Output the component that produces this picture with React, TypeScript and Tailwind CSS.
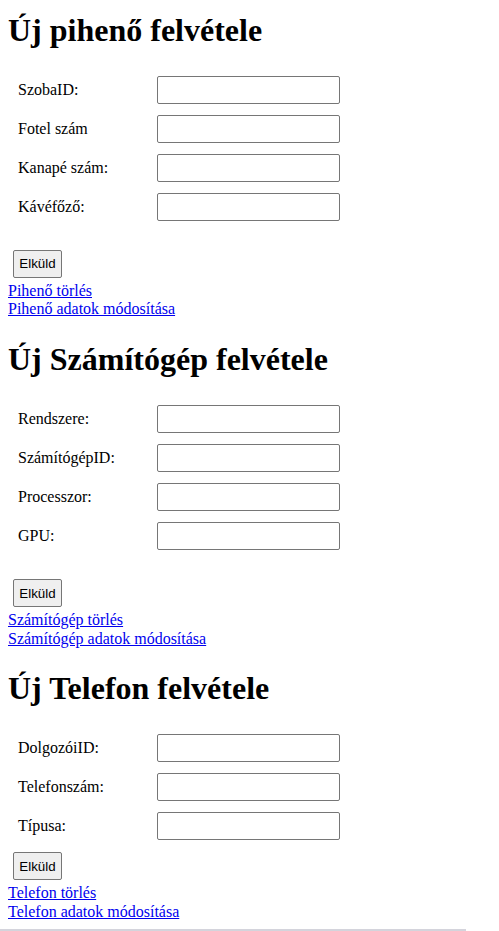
const serif = { fontFamily: '"Liberation Serif", "Times New Roman", serif' };

type Section = {
  title: string;
  fields: string[];
  buttonGap: string;
  links: string[];
};

const sections: Section[] = [
  {
    title: 'Új pihenő felvétele',
    fields: ['SzobaID:', 'Fotel szám', 'Kanapé szám:', 'Kávéfőző:'],
    buttonGap: 'mt-[29px]',
    links: ['Pihenő törlés', 'Pihenő adatok módosítása'],
  },
  {
    title: 'Új Számítógép felvétele',
    fields: ['Rendszere:', 'SzámítógépID:', 'Processzor:', 'GPU:'],
    buttonGap: 'mt-[29px]',
    links: ['Számítógép törlés', 'Számítógép adatok módosítása'],
  },
  {
    title: 'Új Telefon felvétele',
    fields: ['DolgozóiID:', 'Telefonszám:', 'Típusa:'],
    buttonGap: 'mt-[12px]',
    links: ['Telefon törlés', 'Telefon adatok módosítása'],
  },
];

function FormSection({ section, first }: { section: Section; first: boolean }) {
  return (
    <section className="flex flex-col">
      <h1
        className={`${first ? 'mt-[12px]' : 'mt-[22.4px]'} text-[32px] font-bold leading-[36.8px] text-black`}
      >
        {section.title}
      </h1>

      {/* fields */}
      <div className="mt-[27.2px] flex flex-col gap-[11px]">
        {section.fields.map((label) => (
          <div key={label} className="flex h-[28px] items-center">
            <label className="ml-[10px] w-[139px] text-[16px] leading-[18.4px] text-black">{label}</label>
            <input
              type="text"
              className="h-[28px] w-[183px] rounded-[2px] border border-[#767676] bg-white px-1 text-[13px] outline-none"
            />
          </div>
        ))}
      </div>

      <div className={`${section.buttonGap} ml-[5px]`}>
        <button
          type="button"
          className="h-[28px] w-[49px] rounded-[2px] border border-[#767676] bg-[#efefef] text-[13.33px] leading-none text-black"
          style={{ fontFamily: '"Liberation Sans", Arial, sans-serif' }}
        >
          Elküld
        </button>
      </div>

      <div className="mt-[4px] flex flex-col items-start">
        {section.links.map((l) => (
          <a key={l} href="#" className="text-[16px] leading-[18.4px] text-[#0000ee] underline">
            {l}
          </a>
        ))}
      </div>
    </section>
  );
}

export default function App() {
  return (
    <div className="min-h-[931px] bg-white pl-[8px]" style={serif}>
      {sections.map((s, i) => (
        <FormSection key={s.title} section={s} first={i === 0} />
      ))}
      <div className="fixed bottom-0 left-0 h-[2px] w-[466px] bg-[#d4d4dc]" />
    </div>
  );
}
